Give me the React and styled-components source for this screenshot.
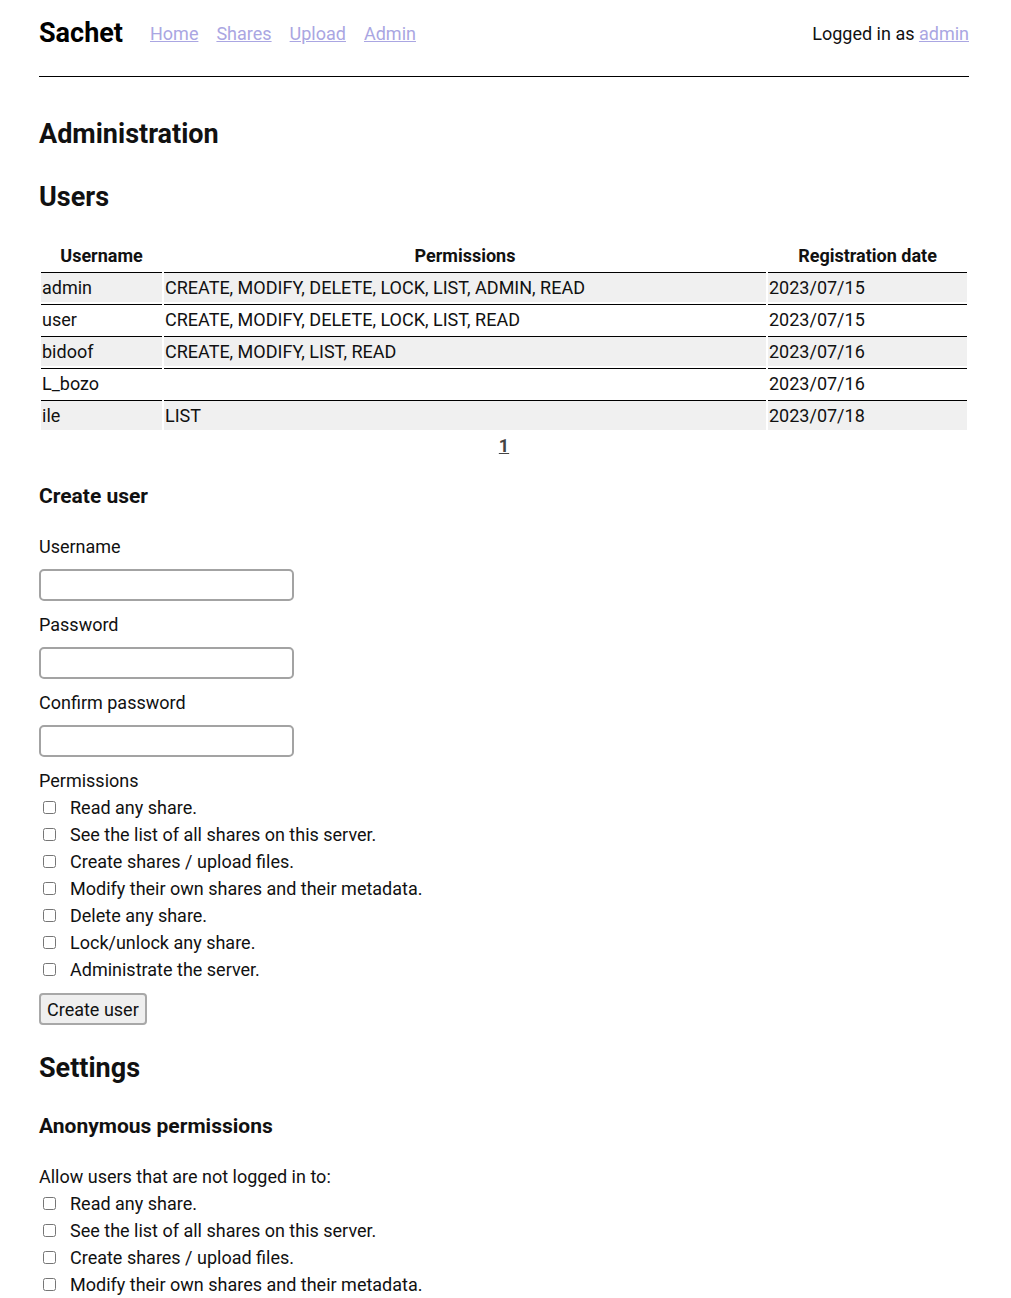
import React from "react";
import styled, { createGlobalStyle } from "styled-components";

const GlobalStyle = createGlobalStyle`
    body {
        margin: 0;
        font-family: Roboto, "Liberation Sans", sans-serif;
        font-size: 18px;
        color: #111;
        background: #fff;
    }
`;

const Page = styled.div`
    max-width: 930px;
    margin: 0 42px 0 39px;
    padding: 0 0 20px;
`;

const Header = styled.header`
    display: flex;
    align-items: center;
    justify-content: space-between;
    height: 66px;
    padding-bottom: 10px;
    border-bottom: 1px solid #000;
`;

const Brand = styled.div`
    display: flex;
    align-items: center;
    gap: 27px;
`;

const Logo = styled.span`
    font-size: 27px;
    font-weight: 700;
    color: #000;
`;

const Nav = styled.nav`
    display: flex;
    gap: 18px;
`;

const Link = styled.a`
    color: #aaa6e2;
    text-decoration: underline;
    cursor: pointer;
`;

const Logged = styled.div`
    color: #111;
`;

const H2 = styled.h2`
    font-size: 27px;
    font-weight: 700;
    margin: ${(p) => p.$m || "0"};
    line-height: 34px;
`;

const H3 = styled.h3`
    font-size: 21px;
    font-weight: 700;
    margin: ${(p) => p.$m || "0"};
    line-height: 24px;
`;

const Table = styled.table`
    width: 100%;
    border-collapse: separate;
    border-spacing: 2px;
    margin-top: 25px;
`;

const Th = styled.th`
    font-weight: 700;
    text-align: center;
    padding: 4px 1px 4px;
    line-height: 21px;
    width: ${(p) => p.$w};
`;

const Td = styled.td`
    border-top: 1px solid #000;
    padding: 4px 1px 4px;
    line-height: 21px;
    background: ${(p) => (p.$alt ? "#f0f0f0" : "transparent")};
`;

const Pager = styled.div`
    text-align: center;
    margin-top: 3px;
    a {
        color: #444;
        font-weight: 700;
        text-decoration: underline;
    }
`;

const Form = styled.form`
    display: flex;
    flex-direction: column;
    align-items: flex-start;
`;

const Label = styled.label`
    display: block;
    line-height: 22px;
    margin: ${(p) => p.$m || "0"};
`;

const Input = styled.input`
    box-sizing: border-box;
    width: 255px;
    height: 32px;
    border: 2px solid #a3a3a3;
    border-radius: 5px;
    margin-top: 11px;
    margin-bottom: 13px;
    font-size: 18px;
`;

const CheckList = styled.div`
    display: flex;
    flex-direction: column;
    margin-top: 2px;
`;

const CheckRow = styled.label`
    display: flex;
    align-items: center;
    height: 27px;
    input {
        width: 13px;
        height: 13px;
        margin: 0 14px 0 4px;
    }
`;

const Button = styled.button`
    font-family: inherit;
    font-size: 18px;
    color: #111;
    padding: 3px 6px;
    height: 32px;
    background: #efefef;
    border: 2px solid #a8a8a8;
    border-radius: 4px;
    margin-top: 10px;
`;

const users = [
    ["admin", "CREATE, MODIFY, DELETE, LOCK, LIST, ADMIN, READ", "2023/07/15"],
    ["user", "CREATE, MODIFY, DELETE, LOCK, LIST, READ", "2023/07/15"],
    ["bidoof", "CREATE, MODIFY, LIST, READ", "2023/07/16"],
    ["L_bozo", "", "2023/07/16"],
    ["ile", "LIST", "2023/07/18"],
];

const perms = [
    "Read any share.",
    "See the list of all shares on this server.",
    "Create shares / upload files.",
    "Modify their own shares and their metadata.",
    "Delete any share.",
    "Lock/unlock any share.",
    "Administrate the server.",
];

const App = () => {
    return (
        <Page>
            <GlobalStyle />
            <Header>
                <Brand>
                    <Logo>Sachet</Logo>
                    <Nav>
                        <Link>Home</Link>
                        <Link>Shares</Link>
                        <Link>Upload</Link>
                        <Link>Admin</Link>
                    </Nav>
                </Brand>
                <Logged>
                    Logged in as <Link>admin</Link>
                </Logged>
            </Header>

            <H2 $m="40px 0 0">Administration</H2>
            <H2 $m="29px 0 0">Users</H2>

            <Table>
                <thead>
                    <tr>
                        <Th $w="119px">Username</Th>
                        <Th $w="600px">Permissions</Th>
                        <Th>Registration date</Th>
                    </tr>
                </thead>
                <tbody>
                    {users.map((u, i) => (
                        <tr key={u[0]}>
                            <Td $alt={i % 2 === 0}>{u[0]}</Td>
                            <Td $alt={i % 2 === 0}>{u[1]}</Td>
                            <Td $alt={i % 2 === 0}>{u[2]}</Td>
                        </tr>
                    ))}
                </tbody>
            </Table>
            <Pager>
                <a>1</a>
            </Pager>

            <H3 $m="28px 0 0">Create user</H3>
            <Form onSubmit={(e) => e.preventDefault()}>
                <Label $m="28px 0 0">Username</Label>
                <Input type="text" />
                <Label>Password</Label>
                <Input type="password" />
                <Label>Confirm password</Label>
                <Input type="password" />
                <Label>Permissions</Label>
                <CheckList>
                    {perms.map((p) => (
                        <CheckRow key={p}>
                            <input type="checkbox" />
                            {p}
                        </CheckRow>
                    ))}
                </CheckList>
                <Button type="submit">Create user</Button>
            </Form>

            <H2 $m="26px 0 0">Settings</H2>
            <H3 $m="29px 0 0">Anonymous permissions</H3>
            <Label $m="28px 0 0">Allow users that are not logged in to:</Label>
            <CheckList>
                {perms.slice(0, 4).map((p) => (
                    <CheckRow key={p}>
                        <input type="checkbox" />
                        {p}
                    </CheckRow>
                ))}
            </CheckList>
        </Page>
    );
};

export default App;
